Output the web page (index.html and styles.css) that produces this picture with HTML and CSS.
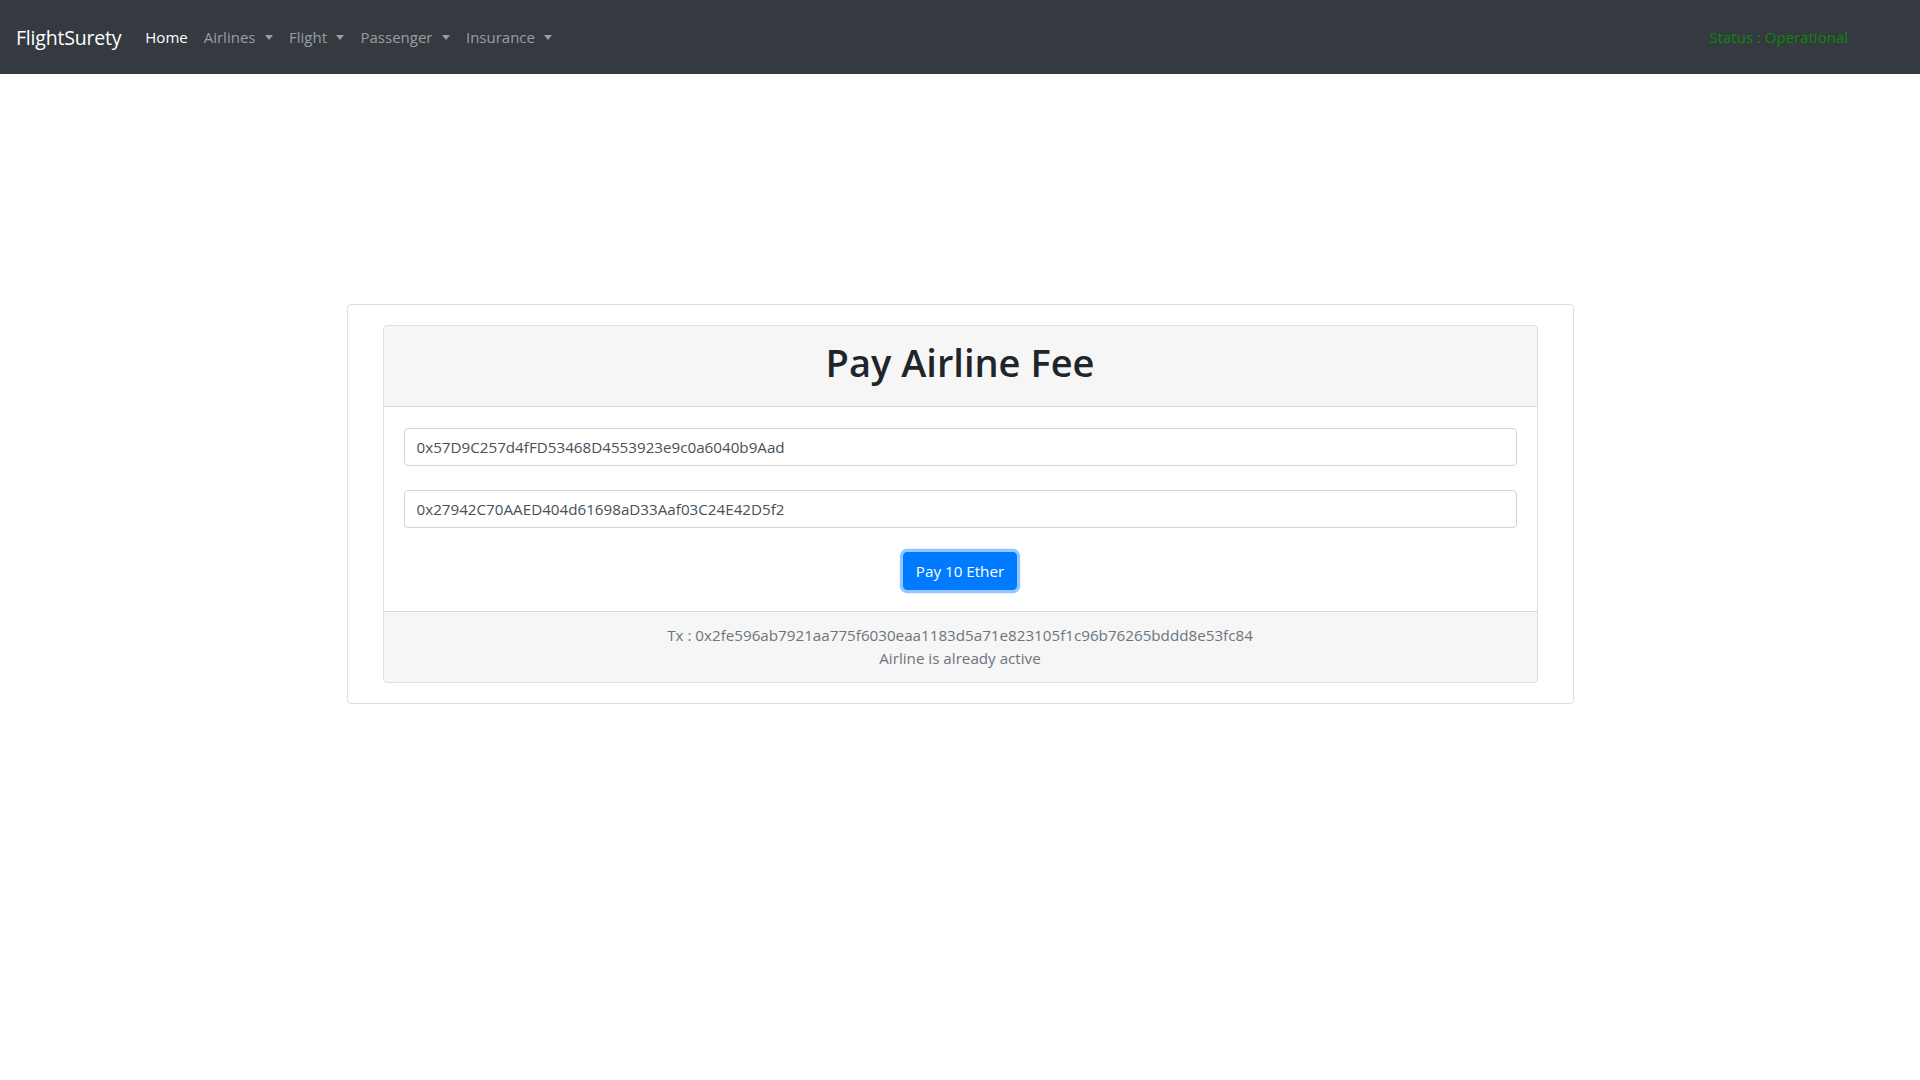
FILE: index.html
```html
<!DOCTYPE html>
<html lang="en">
<head>
<meta charset="utf-8">
<title>FlightSurety</title>
<link rel="stylesheet" href="styles.css">
</head>
<body>
<nav class="navbar">
  <a class="brand" href="#">FlightSurety</a>
  <ul class="nav">
    <li><a class="nav-link active" href="#">Home</a></li>
    <li><a class="nav-link dropdown" href="#">Airlines</a></li>
    <li><a class="nav-link dropdown" href="#">Flight</a></li>
    <li><a class="nav-link dropdown" href="#">Passenger</a></li>
    <li><a class="nav-link dropdown" href="#">Insurance</a></li>
  </ul>
  <span class="status">Status : Operational</span>
</nav>
<main class="main">
  <div class="outer-card">
    <div class="card">
      <div class="card-header">
        <h1 class="title">Pay Airline Fee</h1>
      </div>
      <div class="card-body">
        <input class="form-control" type="text" value="0x57D9C257d4fFD53468D4553923e9c0a6040b9Aad">
        <input class="form-control" type="text" value="0x27942C70AAED404d61698aD33Aaf03C24E42D5f2">
        <div class="actions">
          <button class="btn" type="button">Pay 10 Ether</button>
        </div>
      </div>
      <div class="card-footer">
        <div>Tx : 0x2fe596ab7921aa775f6030eaa1183d5a71e823105f1c96b76265bddd8e53fc84</div>
        <div>Airline is already active</div>
      </div>
    </div>
  </div>
</main>
</body>
</html>
```
FILE: styles.css
```css
* { box-sizing: border-box; }
html, body { margin: 0; padding: 0; }
body {
  font-family: "Segoe UI", "Open Sans", "Noto Sans", sans-serif;
  font-size: 16px;
  line-height: 1.5;
  color: #212529;
  background: #fff;
}
.navbar {
  height: 74px;
  background: #343a40;
  display: flex;
  align-items: center;
  padding: 1px 16px 0;
}
.brand {
  font-size: 19.5px;
  color: #fff;
  text-decoration: none;
  margin-right: 16px;
  letter-spacing: -0.2px;
}
.nav {
  list-style: none;
  margin: 0;
  padding: 0;
  display: flex;
  flex: 1;
}
.nav-link {
  display: block;
  padding: 0 8px;
  color: rgba(255,255,255,.5);
  text-decoration: none;
  font-size: 15px;
}
.nav-link.dropdown { padding-right: 8px; }
.nav-link.active { color: #fff; }
.dropdown::after {
  content: "";
  display: inline-block;
  margin-left: 9.5px;
  vertical-align: 3px;
  border-top: 5px solid;
  border-right: 4.8px solid transparent;
  border-left: 4.8px solid transparent;
  border-bottom: 0;
}
.status {
  color: #0a880a;
  font-size: 15px;
  margin-right: 56px;
}
.main {
  display: flex;
  justify-content: center;
  padding-top: 230px;
}
.outer-card {
  width: 1227px;
  border: 1px solid rgba(0,0,0,.125);
  border-radius: 4px;
  padding: 20px 35px;
}
.card {
  border: 1px solid rgba(0,0,0,.125);
  border-radius: 4px;
  overflow: hidden;
}
.card-header {
  background: rgba(0,0,0,.035);
  border-bottom: 1px solid rgba(0,0,0,.125);
  padding: 12px 20px;
  text-align: center;
}
.title {
  margin: 0 0 8px;
  font-size: 38px;
  font-weight: 600;
  line-height: 48px;
  color: #212529;
}
.card-body {
  padding: 21px 20px 21px;
}
.form-control {
  display: block;
  width: 100%;
  height: 38px;
  padding: 6px 12px;
  font: inherit;
  font-size: 15.2px;
  color: #495057;
  background: #fff;
  border: 1px solid #ced4da;
  border-radius: 4px;
  margin-bottom: 24px;
}
.actions {
  display: flex;
  justify-content: center;
}
.btn {
  font: inherit;
  font-size: 15.2px;
  color: #fff;
  background: #007bff;
  border: 1px solid #007bff;
  border-radius: 4px;
  padding: 6px 12px;
  height: 38px;
  box-shadow: 0 0 0 3.2px rgba(38,143,255,.5);
}
.card-footer {
  background: rgba(0,0,0,.035);
  border-top: 1px solid rgba(0,0,0,.125);
  padding: 12px 20px;
  text-align: center;
  color: #6c757d;
  font-size: 15.2px;
}
```
